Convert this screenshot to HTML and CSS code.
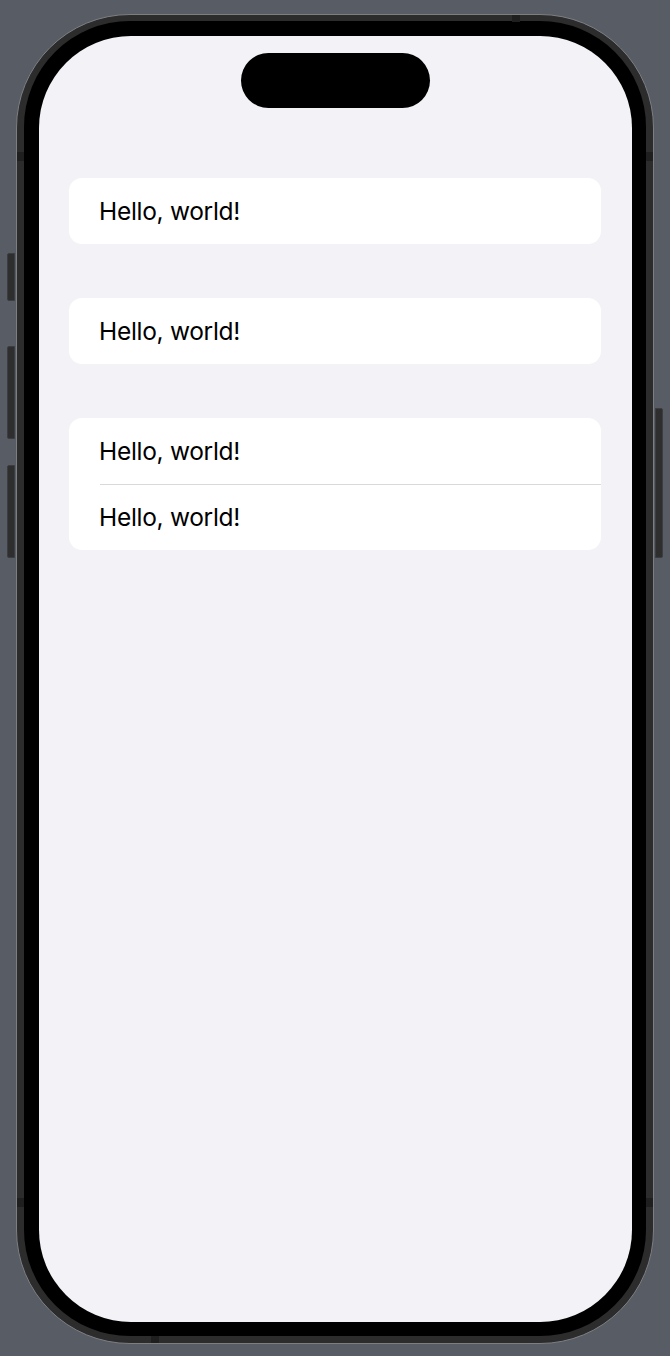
FILE: index.html
```html
<!DOCTYPE html>
<html lang="en">
<head>
<meta charset="utf-8">
<title>Hello, world!</title>
<link rel="stylesheet" href="styles.css">
</head>
<body>
<div class="stage">
  <div class="phone">
    <span class="btn btn-silent"></span>
    <span class="btn btn-vol-up"></span>
    <span class="btn btn-vol-down"></span>
    <span class="btn btn-power"></span>
    <span class="band band-top"></span>
    <span class="band band-bottom"></span>
    <span class="band band-l1"></span>
    <span class="band band-l2"></span>
    <span class="band band-r1"></span>
    <span class="band band-r2"></span>
    <div class="bezel">
      <div class="screen">
        <div class="island"></div>
        <div class="list">
          <section class="group">
            <div class="row">Hello, world!</div>
          </section>
          <section class="group">
            <div class="row">Hello, world!</div>
          </section>
          <section class="group">
            <div class="row">Hello, world!</div>
            <div class="row">Hello, world!</div>
          </section>
        </div>
      </div>
    </div>
  </div>
</div>
</body>
</html>
```

FILE: styles.css
```css
html, body {
  margin: 0;
  padding: 0;
  background: #585c64;
}

.stage {
  width: 670px;
  height: 1356px;
  padding: 14px 0 0 16px;
  box-sizing: border-box;
}

.phone {
  position: relative;
  width: 638px;
  height: 1330px;
  box-sizing: border-box;
  border-radius: 114px;
  background: #2c2c2d;
  border: 1px solid #7c7e82;
  padding: 6px 7px 7px 7px;
}

.btn {
  position: absolute;
  width: 8px;
  background: #2e2e2f;
  border: 1px solid #3c3d40;
  box-sizing: border-box;
}
.btn-silent { left: -10px; top: 238px; height: 48px; border-radius: 2px 0 0 2px; }
.btn-vol-up { left: -10px; top: 331px; height: 93px; border-radius: 2px 0 0 2px; }
.btn-vol-down { left: -10px; top: 450px; height: 93px; border-radius: 2px 0 0 2px; }
.btn-power { right: -10px; top: 393px; height: 150px; border-radius: 0 2px 2px 0; }

.band {
  position: absolute;
  background: #1f1f20;
}
.band-top { top: 0; left: 495px; width: 8px; height: 7px; }
.band-bottom { bottom: 0; left: 134px; width: 8px; height: 7px; }
.band-l1 { left: 0; top: 137px; width: 7px; height: 9px; }
.band-l2 { left: 0; top: 1183px; width: 7px; height: 9px; }
.band-r1 { right: 0; top: 137px; width: 7px; height: 9px; }
.band-r2 { right: 0; top: 1183px; width: 7px; height: 9px; }

.bezel {
  height: 100%;
  box-sizing: border-box;
  background: #000;
  border-radius: 106px;
  padding: 15px 14px 14px 15px;
}

.screen {
  position: relative;
  height: 100%;
  background: #f2f2f7;
  border-radius: 92px;
  overflow: hidden;
  padding: 142px 31px 0 30px;
  box-sizing: border-box;
}

.island {
  position: absolute;
  top: 17px;
  left: 202px;
  width: 189px;
  height: 55px;
  border-radius: 28px;
  background: #000;
}

.list {
  display: flex;
  flex-direction: column;
  gap: 54px;
}

.group {
  background: #fff;
  border-radius: 13px;
  overflow: hidden;
}

.row {
  height: 66px;
  display: flex;
  align-items: center;
  padding-left: 30px;
  font-family: Inter, "Liberation Sans", sans-serif;
  font-size: 24.5px;
  letter-spacing: -0.3px;
  color: #000;
  position: relative;
}

.row + .row::before {
  content: "";
  position: absolute;
  top: 0;
  left: 31px;
  right: 0;
  height: 1px;
  background: #d9d9dd;
}
```
